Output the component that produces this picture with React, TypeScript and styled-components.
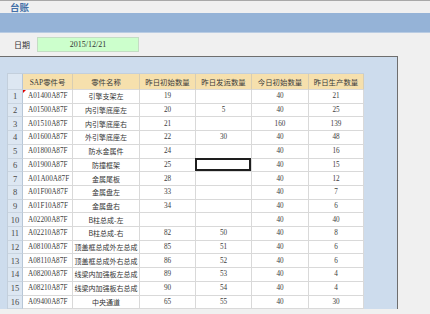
import React from 'react';
import styled, { createGlobalStyle } from 'styled-components';

const GlobalStyle = createGlobalStyle`
    html, body {
        margin: 0;
        padding: 0;
        background: #f0f0f0;
        width: 430px;
        height: 314px;
        overflow: hidden;
    }
`;

const Page = styled.div`
    width: 430px;
    height: 314px;
    overflow: hidden;
    background: #f0f0f0;
    font-family: "Liberation Serif", "Noto Sans CJK SC", serif;
`;

const TitleBar = styled.div`
    height: 12px;
    border-top: 1px solid #a8a8a8;
    padding-left: 10px;
    display: flex;
    align-items: center;
    font-family: "Noto Sans CJK SC", sans-serif;
    font-size: 9.5px;
    font-weight: bold;
    color: #4470a8;
`;

const Band = styled.div`
    height: 19px;
    background: #95b3d7;
    border-bottom: 1px solid #b9cce3;
`;

const DateRow = styled.div`
    height: 23px;
    display: flex;
    align-items: center;
    padding-left: 14px;
    gap: 7px;
`;

const Label = styled.span`
    font-family: "Noto Sans CJK SC", sans-serif;
    font-size: 8px;
    color: #333;
`;

const DateBox = styled.div`
    width: 100px;
    height: 13px;
    background: #ccffcc;
    border: 1px solid #c4dcc4;
    display: flex;
    align-items: center;
    justify-content: center;
    font-size: 8px;
    color: #333;
`;

const Panel = styled.div`
    width: 390px;
    height: 236px;
    background: #cddced;
    border-top: 1px solid #6e6e6e;
    border-right: 1px solid #6e6e6e;
    padding: 16px 0 0 7px;
`;

const Grid = styled.div`
    display: grid;
    grid-template-columns: 15px 50px 67px 56px 56px 57px 55px;
    grid-template-rows: 16px;
    grid-auto-rows: 13.71px;
    width: max-content;
    border-top: 1px solid #c3cfdc;
    border-left: 1px solid #c3cfdc;
`;

const Cell = styled.div<{ $align?: 'left' | 'center' }>`
    position: relative;
    box-sizing: border-box;
    background: #ffffff;
    border-right: 1px solid #d9d9d9;
    border-bottom: 1px solid #d9d9d9;
    display: flex;
    align-items: center;
    justify-content: ${p => (p.$align === 'left' ? 'flex-start' : 'center')};
    padding-left: ${p => (p.$align === 'left' ? '5px' : '0')};
    font-size: 7.2px;
    color: #3c3c3c;
    white-space: nowrap;
    overflow: hidden;
`;

const NameCell = styled(Cell)`
    font-family: "Noto Sans CJK SC", sans-serif;
    font-size: 7px;
    color: #333;
`;

const HeadCell = styled(Cell)`
    background: #f6e0ad;
    border-right-color: #d8cdb2;
    font-family: "Liberation Serif", "Noto Sans CJK SC", serif;
    font-size: 7.4px;
    color: #3a3a3a;
`;

const IndexCell = styled(Cell)`
    background: #dde7f2;
    border-right-color: #b7c6d6;
    border-bottom-color: #c9d4e0;
    font-size: 8.5px;
    color: #4a4a4a;
`;

const Corner = styled(IndexCell)``;

const Selected = styled(Cell)`
    overflow: visible;
    &::after {
        content: '';
        position: absolute;
        left: -1px;
        top: -1px;
        right: 0;
        bottom: 0;
        border: 2px solid #1e1e1e;
    }
`;

const Marked = styled(Cell)`
    &::before {
        content: '';
        position: absolute;
        left: 0;
        top: 0;
        border-top: 3px solid #e00000;
        border-right: 3px solid transparent;
    }
`;

const headers = ['SAP零件号', '零件名称', '昨日初始数量', '昨日发运数量', '今日初始数量', '昨日生产数量'];

type Row = [string, string, string, string, string, string];

const rows: Row[] = [
    ['A01400A87F', '引擎支架左', '19', '', '40', '21'],
    ['A01500A87F', '内引擎底座左', '20', '5', '40', '25'],
    ['A01510A87F', '内引擎底座右', '21', '', '160', '139'],
    ['A01600A87F', '外引擎底座左', '22', '30', '40', '48'],
    ['A01800A87F', '防水金属件', '24', '', '40', '16'],
    ['A01900A87F', '防撞框架', '25', '', '40', '15'],
    ['A01A00A87F', '金属尾板', '28', '', '40', '12'],
    ['A01F00A87F', '金属盘左', '33', '', '40', '7'],
    ['A01F10A87F', '金属盘右', '34', '', '40', '6'],
    ['A02200A87F', 'B柱总成-左', '', '', '40', '40'],
    ['A02210A87F', 'B柱总成-右', '82', '50', '40', '8'],
    ['A08100A87F', '顶盖框总成外左总成', '85', '51', '40', '6'],
    ['A08110A87F', '顶盖框总成外右总成', '86', '52', '40', '6'],
    ['A08200A87F', '线梁内加强板左总成', '89', '53', '40', '4'],
    ['A08210A87F', '线梁内加强板右总成', '90', '54', '40', '4'],
    ['A09400A87F', '中央通道', '65', '55', '40', '30'],
];

const App = () => {
    return (
        <Page>
            <GlobalStyle />
            <TitleBar>台账</TitleBar>
            <Band />
            <DateRow>
                <Label>日期</Label>
                <DateBox>2015/12/21</DateBox>
            </DateRow>
            <Panel>
                <Grid>
                    <Corner />
                    {headers.map(h => <HeadCell key={h}>{h}</HeadCell>)}
                    {rows.map((r, i) => (
                        <React.Fragment key={r[0]}>
                            <IndexCell>{i + 1}</IndexCell>
                            {i === 0
                                ? <Marked $align="left">{r[0]}</Marked>
                                : <Cell $align="left">{r[0]}</Cell>}
                            <NameCell>{r[1]}</NameCell>
                            <Cell>{r[2]}</Cell>
                            {i === 5 ? <Selected /> : <Cell>{r[3]}</Cell>}
                            <Cell>{r[4]}</Cell>
                            <Cell>{r[5]}</Cell>
                        </React.Fragment>
                    ))}
                </Grid>
            </Panel>
        </Page>
    );
};

export default App;
